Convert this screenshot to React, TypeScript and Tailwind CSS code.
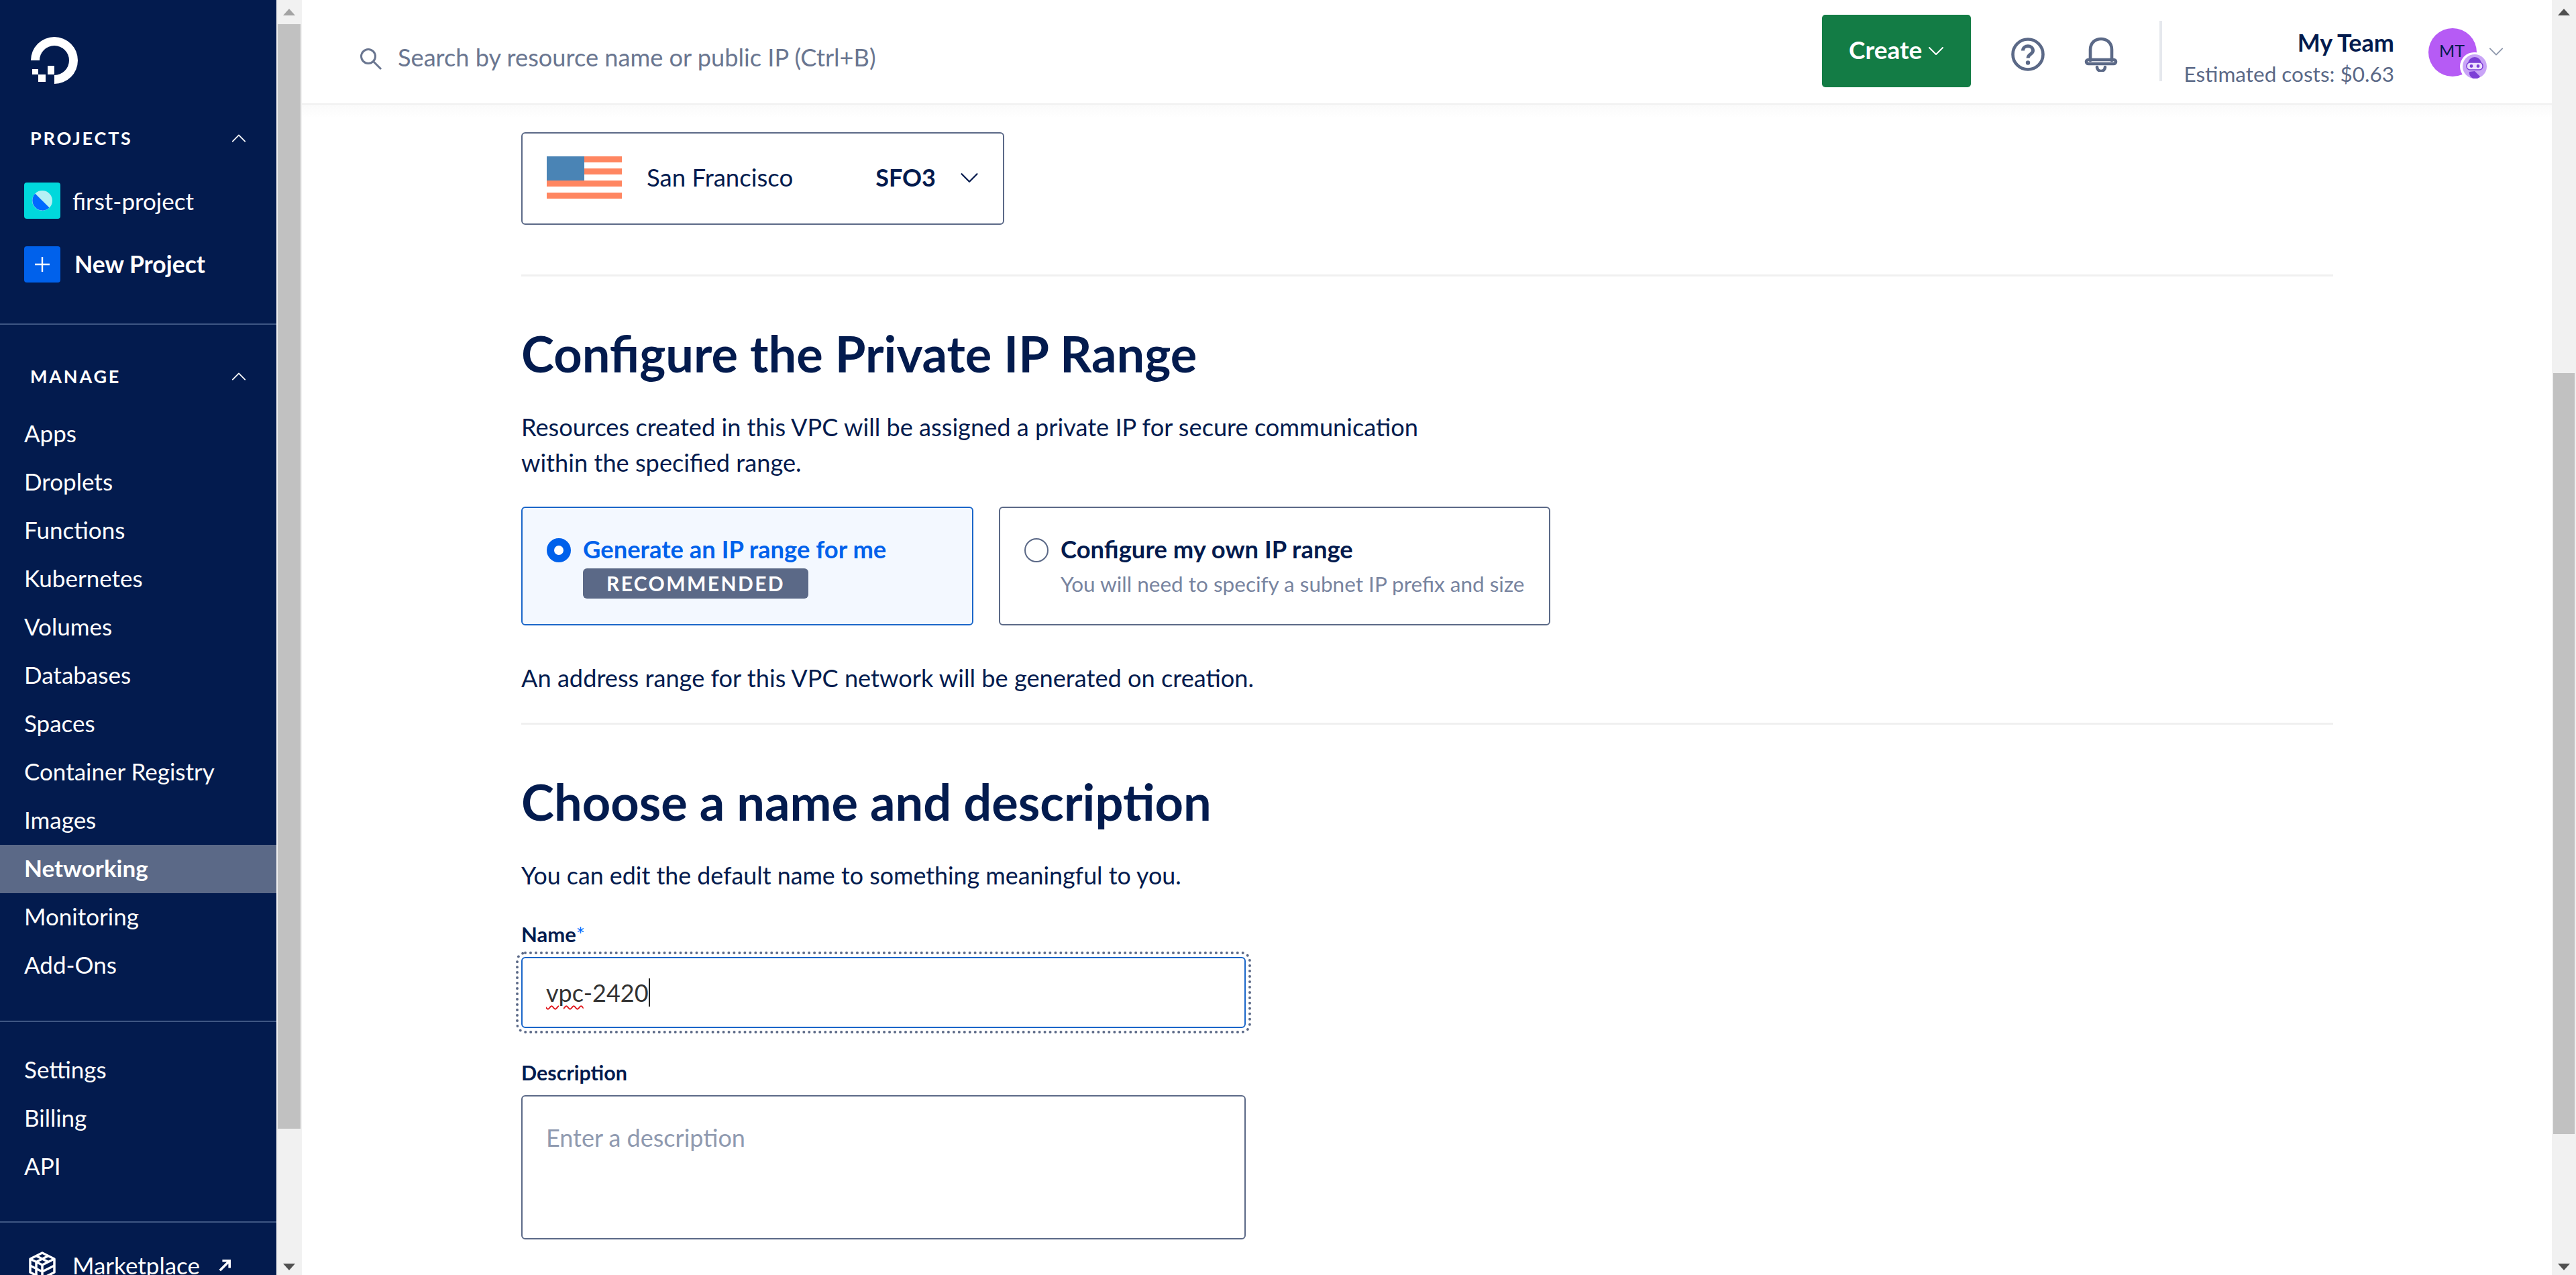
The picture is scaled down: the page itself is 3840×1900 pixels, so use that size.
import React from "react";

function Chevron({ className, up }: { className: string; up?: boolean }) {
  return (
    <svg viewBox="0 0 24 14" className={className} fill="none" stroke="currentColor" strokeWidth="2" strokeLinecap="round" strokeLinejoin="round">
      <path d={up ? "M2 12 L12 2 L22 12" : "M2 2 L12 12 L22 2"} />
    </svg>
  );
}

function NavItem({ label, active }: { label: string; active?: boolean }) {
  return (
    <div className={`h-[72px] flex items-center pl-[36px] pb-[3px] text-[35px] text-white ${active ? "bg-[#5b6987] font-bold" : ""}`}>
      {label}
    </div>
  );
}

function Divider({ className }: { className: string }) {
  return <div className={`h-[3px] bg-[#f0f0f0] ${className}`} />;
}

function ScrollArrow({ down, fill }: { down?: boolean; fill: string }) {
  return (
    <svg viewBox="0 0 18 10" className="w-[18px] h-[10px]" fill={fill}>
      <path d={down ? "M0 0 H18 L9 10 Z" : "M9 0 L18 10 H0 Z"} />
    </svg>
  );
}

function Sidebar() {
  return (
    <aside className="w-[412px] h-[1900px] shrink-0 bg-[#031b4e] overflow-hidden flex flex-col text-white">
      <div className="h-[165px] pt-[55px] pl-[46px] shrink-0">
        <svg viewBox="0 0 70 70" className="w-[70px] h-[70px]" fill="#fff">
          <path d="M0 35 A35 35 0 1 1 35 70 V57 A22 22 0 1 0 13 35 Z" />
          <rect x="25" y="43" width="10" height="13" />
          <rect x="11" y="56" width="11" height="11" />
          <rect x="2" y="48" width="9" height="8" />
        </svg>
      </div>
      <div className="h-[82px] flex items-center justify-between pl-[45px] pr-[45px] shrink-0">
        <span className="text-[27px] font-bold tracking-[2.8px] leading-[82px]">PROJECTS</span>
        <Chevron up className="w-[22px] h-[14px]" />
      </div>
      <div className="flex items-center h-[54px] mt-[25px] pl-[36px] gap-[18px] shrink-0">
        <div className="w-[54px] h-[54px] rounded-[4px] bg-[#00d8dc] flex items-center justify-center">
          <svg viewBox="0 0 30 30" className="w-[30px] h-[30px]">
            <circle cx="15" cy="15" r="15" fill="#b5f0f4" />
            <path d="M4.4 4.4 A15 15 0 0 0 25.6 25.6 Z" fill="#0069ff" />
          </svg>
        </div>
        <span className="text-[35px] leading-[54px]">first-project</span>
      </div>
      <div className="flex items-center h-[54px] mt-[41px] pl-[36px] gap-[21px] shrink-0">
        <div className="w-[54px] h-[54px] rounded-[4px] bg-[#0061eb] flex items-center justify-center">
          <svg viewBox="0 0 24 24" className="w-[24px] h-[24px]" stroke="#fff" strokeWidth="2.4">
            <path d="M12 1 V23 M1 12 H23" />
          </svg>
        </div>
        <span className="text-[35.5px] leading-[54px] font-bold">New Project</span>
      </div>
      <div className="h-[2px] bg-[#3e5683] mt-[61px] shrink-0" />
      <div className="h-[72px] flex items-center justify-between pl-[45px] pr-[45px] mt-[41px] shrink-0">
        <span className="text-[27px] font-bold tracking-[2.8px] leading-[72px]">MANAGE</span>
        <Chevron up className="w-[22px] h-[14px]" />
      </div>
      <div className="mt-[14px] shrink-0">
        {["Apps", "Droplets", "Functions", "Kubernetes", "Volumes", "Databases", "Spaces", "Container Registry", "Images"].map((l) => (
          <NavItem key={l} label={l} />
        ))}
        <NavItem label="Networking" active />
        <NavItem label="Monitoring" />
        <NavItem label="Add-Ons" />
      </div>
      <div className="h-[2px] bg-[#3e5683] mt-[46px] shrink-0" />
      <div className="mt-[36px] shrink-0">
        <NavItem label="Settings" />
        <NavItem label="Billing" />
        <NavItem label="API" />
      </div>
      <div className="h-[2px] bg-[#3e5683] mt-[45px] shrink-0" />
      <div className="flex items-center h-[72px] mt-[28px] pl-[43px] shrink-0">
        <svg viewBox="0 0 40 42" className="w-[40px] h-[42px] shrink-0" fill="none" stroke="#fff" strokeWidth="3.5" strokeLinejoin="round">
          <path d="M20 2 L38 11 V31 L20 40 L2 31 V11 Z" />
          <path d="M2 11 L20 20 L38 11 M20 20 V40 M11 15.5 L29 6.5 M29 15.5 L11 6.5 M2 21 L20 30 L38 21 M11 15.5 V35.5" />
        </svg>
        <span className="text-[35px] leading-[72px] ml-[25px] mb-[3px]">Marketplace</span>
        <svg viewBox="0 0 20 20" className="w-[20px] h-[18px] ml-[27px]" fill="none" stroke="#fff" strokeWidth="4">
          <path d="M2 18 L17 3 M6 2 H18 V14" />
        </svg>
      </div>
    </aside>
  );
}

function SidebarScroll() {
  return (
    <div className="w-[38px] h-[1900px] shrink-0 bg-[#f1f1f1] flex flex-col items-center">
      <div className="h-[36px] flex items-center justify-center shrink-0">
        <ScrollArrow fill="#a3a3a3" />
      </div>
      <div className="w-[34px] h-[1646px] bg-[#c1c1c1] shrink-0" />
      <div className="flex-1 flex items-end pb-[7px]">
        <ScrollArrow down fill="#505050" />
      </div>
    </div>
  );
}

function MainScroll() {
  return (
    <div className="w-[36px] h-[1900px] shrink-0 bg-[#f1f1f1] flex flex-col items-center">
      <div className="h-[36px] flex items-center justify-center shrink-0">
        <ScrollArrow fill="#505050" />
      </div>
      <div className="w-[32px] h-[1134px] mt-[520px] bg-[#c1c1c1] shrink-0" />
      <div className="flex-1 flex items-end pb-[7px]">
        <ScrollArrow down fill="#505050" />
      </div>
    </div>
  );
}

function Header() {
  return (
    <header className="h-[156px] shrink-0 border-b-[2px] border-[#f0f0f0] flex items-center">
      <svg viewBox="0 0 36 36" className="w-[36px] h-[36px] ml-[85px] mt-[22px] shrink-0" fill="none" stroke="#6a7690" strokeWidth="3">
        <circle cx="14" cy="14" r="10.5" />
        <path d="M22 22 L33 33" />
      </svg>
      <span className="ml-[22px] text-[36.2px] leading-[54px] text-[#6a7690] mt-[16px] whitespace-nowrap">Search by resource name or public IP (Ctrl+B)</span>
      <div className="ml-auto flex items-center h-[108px] w-[222px] shrink-0 bg-[#137c45] rounded-[5px] pl-[40px] mb-[2px]">
        <span className="text-white font-bold text-[37px] leading-[54px] mb-[4px]">Create</span>
        <Chevron className="w-[26px] h-[14px] ml-[8px] text-white" />
      </div>
      <svg viewBox="0 0 50 50" className="w-[50px] h-[50px] ml-[60px] mt-[8px] shrink-0" fill="none" stroke="#5b6987" strokeWidth="4.6">
        <circle cx="25" cy="25" r="22.5" />
        <path d="M17.5 19.5 C17.5 10.5 32.5 10.5 32.5 19.5 C32.5 25 25 24.5 25 30.5" strokeWidth="5" />
        <circle cx="25" cy="37.5" r="3.2" fill="#5b6987" stroke="none" />
      </svg>
      <svg viewBox="0 0 50 52" className="w-[50px] h-[52px] ml-[59px] mt-[8px] shrink-0" fill="none" stroke="#5b6987" strokeWidth="4.6" strokeLinejoin="round" strokeLinecap="round">
        <path d="M9 35 V19 C9 9 16 3 25 3 C34 3 41 9 41 19 V35" />
        <rect x="3" y="34" width="44" height="6" rx="3" />
        <path d="M19 45 A6 6 0 0 0 31 45" />
      </svg>
      <div className="w-[4px] h-[90px] shrink-0 bg-[#e5e8ed] ml-[62px] mb-[2px]" />
      <div className="w-[311px] shrink-0 ml-[35px] flex flex-col items-end mt-[20px] whitespace-nowrap">
        <span className="text-[36px] leading-[47px] font-bold text-[#031b4e]">My Team</span>
        <span className="text-[31.5px] leading-[47px] text-[#5b6987]">Estimated costs: $0.63</span>
      </div>
      <div className="relative ml-[51px] w-[72px] h-[72px] rounded-full bg-[#b65bf5] flex items-center justify-center text-[25px] text-[#031b4e] mb-[-2px] shrink-0">
        <span className="mr-[2px] mb-[4px]">MT</span>
        <div className="absolute left-[47px] top-[36px] w-[44px] h-[42px] rounded-full bg-white flex items-center justify-center">
          <svg viewBox="0 0 36 36" className="w-[36px] h-[36px]">
            <circle cx="18" cy="18" r="18" fill="#c9a4f7" />
            <path d="M8 14 A10 10 0 0 1 28 14 Z" fill="#7c3fd6" />
            <rect x="6" y="12" width="24" height="11" rx="5" fill="#ede0fd" stroke="#7c3fd6" strokeWidth="1.5" />
            <circle cx="13" cy="17.5" r="2.4" fill="#7c3fd6" />
            <circle cx="23" cy="17.5" r="2.4" fill="#7c3fd6" />
            <path d="M10 26 A9 9 0 0 0 26 33 L18 25 Z" fill="#7c3fd6" />
          </svg>
        </div>
      </div>
      <Chevron className="w-[22px] h-[14px] ml-[18px] mr-[72px] text-[#8d97ac] shrink-0" />
    </header>
  );
}

function Content() {
  return (
    <div className="pl-[327px] pr-[326px] text-[#031b4e] bg-gradient-to-b from-[#fafafa] to-white to-[20px]">
      <div className="pt-[41px]">
        <div className="w-[720px] h-[138px] rounded-[6px] border-[2px] border-[#5b6987] flex items-center pl-[36px] pr-[36px]">
          <div className="w-[112px] h-[63px] flex flex-col justify-between relative shrink-0 mb-[4px]">
            <div className="h-[9px] bg-[#ff8661]" />
            <div className="h-[9px] bg-[#ff8661]" />
            <div className="h-[9px] bg-[#ff8661]" />
            <div className="h-[9px] bg-[#ff8661]" />
            <div className="absolute left-0 top-0 w-[56px] h-[36px] bg-[#4a84b5]" />
          </div>
          <span className="ml-[37px] text-[36.6px] leading-[54px] mb-[4px]">San Francisco</span>
          <span className="ml-auto text-[36px] leading-[54px] font-bold mb-[4px]">SFO3</span>
          <Chevron className="w-[28px] h-[16px] ml-[36px] mb-[2px]" />
        </div>
      </div>
      <Divider className="mt-[74px]" />
      <h2 className="mt-[75px] text-[74px] leading-[80px] font-bold">Configure the Private IP Range</h2>
      <p className="mt-[43px] w-[1400px] text-[36.2px] leading-[53px]">
        Resources created in this VPC will be assigned a private IP for secure communication
        <br />
        within the specified range.
      </p>
      <div className="mt-[39px] flex gap-[38px]">
        <div className="w-[674px] h-[177px] rounded-[6px] border-[2px] border-[#1a66c9] bg-[#f3f8ff] flex pl-[36px] pt-[45px]">
          <div className="w-[36px] h-[36px] rounded-full border-[11px] border-[#0061eb] bg-white shrink-0" />
          <div className="ml-[18px] -mt-[2px]">
            <div className="text-[36.4px] leading-[36px] font-bold text-[#0061eb]">Generate an IP range for me</div>
            <div className="mt-[11px] w-[336px] h-[45px] rounded-[6px] bg-[#5b6987] flex items-center justify-center text-white font-bold text-[30px] tracking-[2.4px]">RECOMMENDED</div>
          </div>
        </div>
        <div className="w-[822px] h-[177px] rounded-[6px] border-[2px] border-[#5b6987] flex pl-[36px] pt-[45px]">
          <div className="w-[36px] h-[36px] rounded-full border-[2px] border-[#5b6987] bg-white shrink-0" />
          <div className="ml-[18px] -mt-[2px]">
            <div className="text-[36.4px] leading-[36px] font-bold">Configure my own IP range</div>
            <div className="mt-[16px] text-[31.5px] leading-[36px] text-[#78849f]">You will need to specify a subnet IP prefix and size</div>
          </div>
        </div>
      </div>
      <p className="mt-[51px] text-[36.2px] leading-[54px]">An address range for this VPC network will be generated on creation.</p>
      <Divider className="mt-[40px]" />
      <h2 className="mt-[75px] text-[74px] leading-[80px] font-bold">Choose a name and description</h2>
      <p className="mt-[43px] text-[35.8px] leading-[54px]">You can edit the default name to something meaningful to you.</p>
      <div className="mt-[40px] text-[31px] leading-[40px] font-bold">
        Name<span className="text-[#0069ff] font-normal">*</span>
      </div>
      <div className="mt-[14px] w-[1080px] h-[106px] rounded-[6px] border-[2px] border-[#1a66c9] outline-dotted outline-[4px] outline-offset-[4px] outline-[#5b6987] flex items-center pl-[35px]">
        <span className="text-[36px] leading-[54px] text-[#333333]">
          <span className="underline decoration-wavy decoration-[#e0161b] decoration-[2px] underline-offset-[5px]">vpc</span>-2420
        </span>
        <span className="w-[2px] h-[42px] bg-[#222222]" />
      </div>
      <div className="mt-[46px] text-[30.5px] leading-[40px] font-bold">Description</div>
      <div className="mt-[14px] w-[1080px] h-[215px] rounded-[6px] border-[2px] border-[#5b6987] pl-[35px] pt-[34px]">
        <span className="text-[36px] leading-[54px] text-[#8f9ab0]">Enter a description</span>
      </div>
    </div>
  );
}

export default function App() {
  return (
    <div className="w-[3840px] h-[1900px] flex overflow-hidden bg-white font-['Lato',sans-serif]">
      <Sidebar />
      <SidebarScroll />
      <main className="flex-1 min-w-0 h-[1900px] overflow-hidden flex flex-col">
        <Header />
        <Content />
      </main>
      <MainScroll />
    </div>
  );
}
